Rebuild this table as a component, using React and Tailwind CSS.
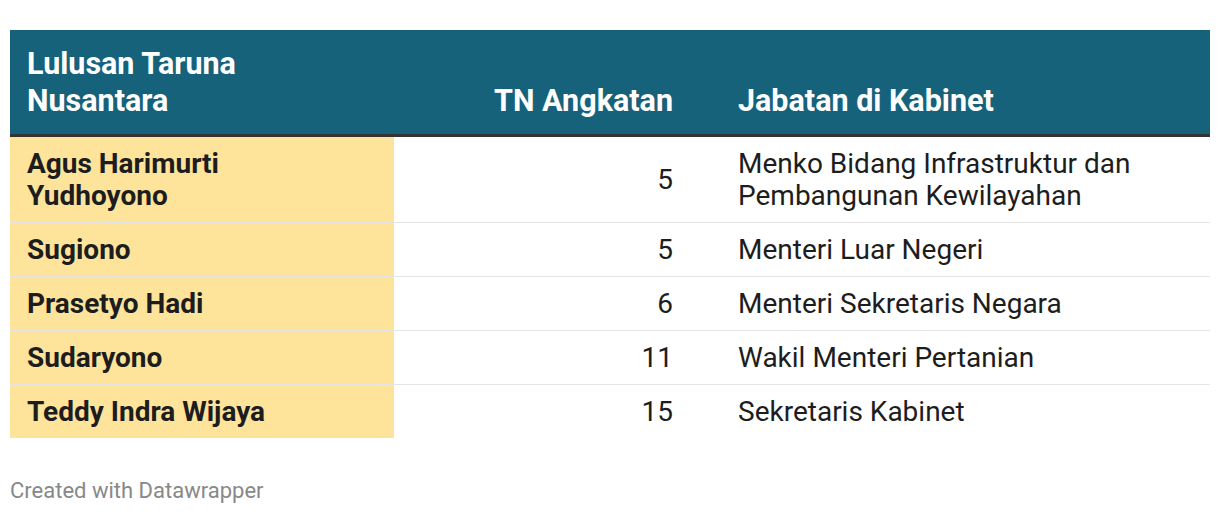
import React from "react";

const rows = [
  { name: ["Agus Harimurti", "Yudhoyono"], n: "5", job: ["Menko Bidang Infrastruktur dan", "Pembangunan Kewilayahan"] },
  { name: ["Sugiono"], n: "5", job: ["Menteri Luar Negeri"] },
  { name: ["Prasetyo Hadi"], n: "6", job: ["Menteri Sekretaris Negara"] },
  { name: ["Sudaryono"], n: "11", job: ["Wakil Menteri Pertanian"] },
  { name: ["Teddy Indra Wijaya"], n: "15", job: ["Sekretaris Kabinet"] },
];

export default function App() {
  return (
    <div className="w-[1220px] h-[514px] bg-white pt-[30px] px-[10px]" style={{ fontFamily: "Roboto, 'Liberation Sans', sans-serif" }}>
      <div className="w-[1200px]">
        <div className="grid grid-cols-[384px_296px_520px] bg-[#17627b] text-white font-bold text-[30.5px] leading-[37px] border-b-[3px] border-[#333333]">
          <div className="pl-[17px] pt-[14.5px] pb-[15.5px] flex flex-col justify-end">
            <div>Lulusan Taruna</div>
            <div>Nusantara</div>
          </div>
          <div className="pr-[17px] pb-[15.5px] flex items-end justify-end">TN Angkatan</div>
          <div className="pl-[48px] pb-[15.5px] flex items-end">Jabatan di Kabinet</div>
        </div>
        {rows.map((r, i) => (
          <div
            key={i}
            className={`grid grid-cols-[384px_296px_520px] text-[28px] leading-[32px] text-[#1d1d1d] ${i < rows.length - 1 ? "border-b border-[#0000001a]" : ""}`}
          >
            <div className="bg-[#fee39b] pl-[17px] py-[10.5px] font-bold flex flex-col justify-center">
              {r.name.map((t) => (
                <div key={t}>{t}</div>
              ))}
            </div>
            <div className="pr-[17px] flex items-center justify-end">{r.n}</div>
            <div className="pl-[48px] py-[10.5px] flex flex-col justify-center">
              {r.job.map((t) => (
                <div key={t}>{t}</div>
              ))}
            </div>
          </div>
        ))}
        <div className="mt-[39px] text-[22px] leading-[28px] text-[#888888]">Created with Datawrapper</div>
      </div>
    </div>
  );
}
